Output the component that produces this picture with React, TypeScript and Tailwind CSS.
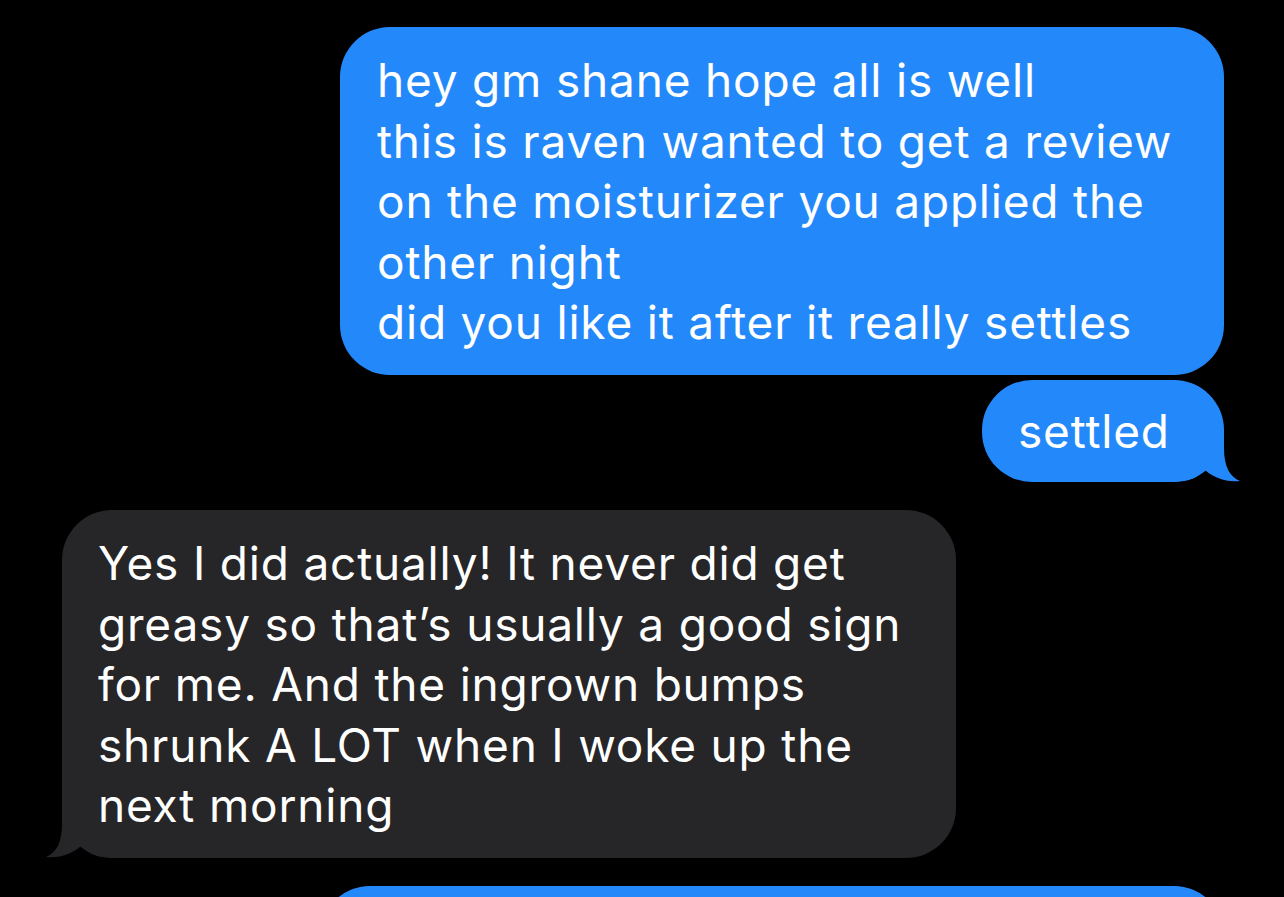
import React from "react";

const Tail = ({ color, side }: { color: string; side: "left" | "right" }) => (
  <svg
    width="62"
    height="51"
    viewBox="0 0 62 51"
    className={
      side === "right"
        ? "absolute -right-[18px] bottom-0"
        : "absolute -left-[18px] bottom-0 -scale-x-100"
    }
  >
    <path
      d="M0 0 H44 V17 C44 36 50 46 60 50 C50 51 36 49 25 39 C18 46 10 50 0 50 Z"
      fill={color}
    />
  </svg>
);

const Bubble = ({
  lines,
  sent,
  tail,
  className,
}: {
  lines: string[];
  sent?: boolean;
  tail?: boolean;
  className: string;
}) => {
  const color = sent ? "#2389fb" : "#262628";
  return (
    <div
      className={`relative rounded-[50px] text-white ${className}`}
      style={{ backgroundColor: color }}
    >
      {tail && <Tail color={color} side={sent ? "right" : "left"} />}
      {lines.map((l, i) => (
        <span key={i} className="relative block whitespace-nowrap">
          {l}
        </span>
      ))}
    </div>
  );
};

export default function App() {
  return (
    <div
      className="w-[1284px] h-[897px] bg-black overflow-hidden pt-[27px] flex flex-col text-[46px] leading-[60.5px] tracking-[0.8px]"
      style={{ fontFamily: "Inter, 'Noto Sans', sans-serif" }}
    >
      {/* mensaje enviado */}
      <Bubble
        sent
        className="self-end mr-[60px] w-[884px] pl-[37px] pt-[23px] pb-[22px]"
        lines={[
          "hey gm shane hope all is well",
          "this is raven wanted to get a review",
          "on the moisturizer you applied the",
          "other night",
          "did you like it after it really settles",
        ]}
      />
      <Bubble
        sent
        tail
        className="self-end mr-[60px] mt-[5px] w-[242px] pl-[36px] pt-[21px] pb-[21px]"
        lines={["settled"]}
      />

      {/* respuesta */}
      <Bubble
        tail
        className="self-start ml-[62px] mt-[28px] w-[894px] pl-[36px] pt-[23px] pb-[22px]"
        lines={[
          "Yes I did actually! It never did get",
          "greasy so that\u2019s usually a good sign",
          "for me. And the ingrown bumps",
          "shrunk A LOT when I woke up the",
          "next morning",
        ]}
      />

      <Bubble
        sent
        className="self-end mr-[60px] mt-[28px] w-[904px] h-[200px] shrink-0"
        lines={[]}
      />
    </div>
  );
}
